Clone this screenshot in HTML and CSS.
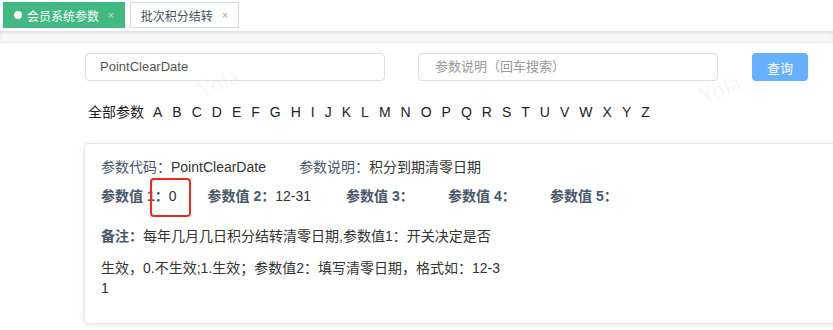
FILE: index.html
```html
<!DOCTYPE html>
<html lang="zh-CN">
<head>
  <meta charset="UTF-8" />
  <title>会员系统参数</title>
  <link rel="stylesheet" href="styles.css">
</head>
<body>
<div class="tabs">
  <div class="tab active"><span class="dot"></span>会员系统参数<span class="close">×</span></div>
  <div class="tab">批次积分结转<span class="close">×</span></div>
</div>
<div class="tabs-shadow"></div>

<main class="main">
  <div class="watermark wm-1">Yola</div>
  <div class="watermark wm-2">Yola</div>

  <div class="search">
    <div class="input">PointClearDate</div>
    <div class="input placeholder">参数说明（回车搜索）</div>
    <button class="btn">查询</button>
  </div>

  <div class="letters">
    <span class="all">全部参数</span>
    <span>A</span><span>B</span><span>C</span><span>D</span><span>E</span><span>F</span><span>G</span><span>H</span><span>I</span><span>J</span><span>K</span><span>L</span><span>M</span><span>N</span><span>O</span><span>P</span><span>Q</span><span>R</span><span>S</span><span>T</span><span>U</span><span>V</span><span>W</span><span>X</span><span>Y</span><span>Z</span>
  </div>

  <div class="card">
    <div class="mark"></div>
    <div class="row">
      <div class="item code"><span class="label">参数代码：</span>PointClearDate</div>
      <div class="item"><span class="label">参数说明：</span>积分到期清零日期</div>
    </div>
    <div class="row values">
      <div class="item"><span class="label">参数值 <b>1</b>：</span>0</div>
      <div class="item wide"><span class="label">参数值 <b>2</b>：</span>12-31</div>
      <div class="item"><span class="label">参数值 <b>3</b>：</span></div>
      <div class="item"><span class="label">参数值 <b>4</b>：</span></div>
      <div class="item"><span class="label">参数值 <b>5</b>：</span></div>
    </div>
    <div class="remark"><span class="label strong">备注：</span>每年几月几日积分结转清零日期,参数值1：开关决定是否</div>
    <div class="remark more">生效，0.不生效;1.生效；参数值2：填写清零日期，格式如：12-31</div>
  </div>
</main>
</body>
</html>
```

FILE: styles.css
```css
/* Basis */
* {
  margin: 0;
  padding: 0;
  box-sizing: border-box;
}

html, body {
  height: 100%;
  overflow: hidden;
  background: #fff;
  font-family: "Liberation Sans", "Noto Sans CJK SC", sans-serif;
  color: #333;
}

/* Tab-Leiste */
.tabs {
  display: flex;
  gap: 5px;
  height: 31px;
  padding: 2px 3px 0;
}

.tab {
  display: flex;
  align-items: center;
  height: 26px;
  padding: 0 10px 0 10px;
  font-size: 12px;
  color: #495060;
  background: #fff;
  border: 1px solid #d8dce5;
}

.tab.active {
  color: #fff;
  background: #42b983;
  border-color: #42b983;
}

.dot {
  width: 8px;
  height: 8px;
  margin-right: 5px;
  border-radius: 50%;
  background: #fff;
}

.close {
  margin-left: 9px;
  font-size: 10px;
  color: #9aa3ad;
}

.tab.active .close {
  color: #b9e6d1;
}

.tabs-shadow {
  height: 12px;
  background: #f7f8fa;
  box-shadow: inset 0 2px 3px rgba(0, 0, 0, 0.1);
  border-bottom: 1px solid #e8eaee;
}

/* Inhalt */
.main {
  position: relative;
  padding: 10px 0 0 85px;
}

.search {
  display: flex;
  align-items: center;
}

.input {
  width: 300px;
  height: 28px;
  padding: 0 14px;
  font-size: 13px;
  line-height: 26px;
  color: #555;
  border: 1px solid #dcdfe6;
  border-radius: 4px;
}

.input.placeholder {
  margin-left: 33px;
  padding-left: 16px;
  color: #999;
}

.btn {
  width: 56px;
  height: 28px;
  margin-left: 34px;
  font-family: inherit;
  font-size: 13px;
  color: #fff;
  background: #66b1ff;
  border: none;
  border-radius: 4px;
  position: relative;
  z-index: 1;
}

.letters {
  display: flex;
  gap: 10px;
  margin-top: 21px;
  padding-left: 3px;
  font-size: 14px;
  line-height: 20px;
  color: #222;
}

.letters .all {
  margin-right: -1px;
}

/* Karte */
.card {
  position: relative;
  width: 800px;
  margin-top: 21px;
  margin-left: -1px;
  padding: 13px 15px 25px 16px;
  font-size: 14px;
  line-height: 20px;
  border: 1px solid #e4e7ed;
  border-radius: 4px;
  box-shadow: 0 1px 6px rgba(0, 0, 0, 0.1);
}

.label {
  color: #48576a;
}

.label b {
  font-weight: bold;
}

.row {
  display: flex;
}

.code {
  width: 198px;
}

.values {
  margin-top: 9px;
}

.values .label,
.label.strong {
  font-weight: 600;
}

.values .item {
  min-width: 71px;
  margin-right: 31px;
}

.values .item.wide {
  margin-right: 35px;
}

.remark {
  width: 402px;
  margin-top: 20px;
  word-break: break-all;
}

.remark.more {
  margin-top: 12px;
}

/* rote Markierung */
.mark {
  position: absolute;
  left: 65px;
  top: 34px;
  width: 41px;
  height: 39px;
  border: 2px solid #ee2a1f;
  border-radius: 4px;
}

/* Wasserzeichen */
.watermark {
  position: absolute;
  font-family: "Liberation Serif", serif;
  font-size: 24px;
  color: rgba(0, 0, 0, 0.05);
  transform: rotate(-22deg);
  pointer-events: none;
}

.wm-1 {
  left: 195px;
  top: 27px;
}

.wm-2 {
  left: 697px;
  top: 33px;
}
```
